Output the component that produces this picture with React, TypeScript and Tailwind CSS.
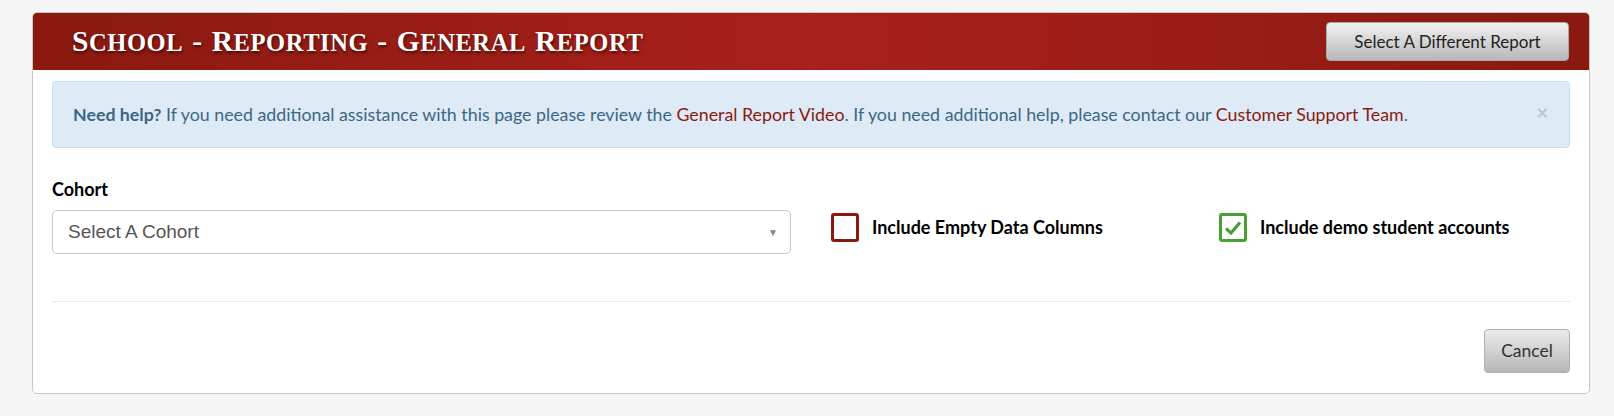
import { useState } from 'react';

const SANS = { fontFamily: 'Lato, "Open Sans", "Noto Sans", sans-serif' };
const SERIF = { fontFamily: '"Liberation Serif", "DejaVu Serif", serif' };

const TITLE = ['School', '-', 'Reporting', '-', 'General', 'Report'];

const Check = ({ color }: { color: string }) => (
  <svg width="18" height="16" viewBox="0 0 18 16">
    <path d="M2 8.5 L7 13 L16 2.5" fill="none" stroke={color} strokeWidth="3.2" />
  </svg>
);

const App = () => {
  const [emptyCols, setEmptyCols] = useState(false);
  const [demo, setDemo] = useState(true);

  return (
    <div className="min-h-[416px] w-full bg-[#f5f5f5] pt-[12px] pl-[32px] pr-[24px]" style={SANS}>
      <div className="w-[1558px] rounded-[5px] border border-[#c8c8c8] bg-white overflow-hidden">
        {/* Header */}
        <div className="h-[57px] flex items-center justify-between pl-[39px] pr-[20px] bg-[linear-gradient(to_right,#8a1910,#a8211a_50%,#8a1910)]">
          <h1
            className="flex items-baseline gap-[9px] text-white font-bold tracking-[0.6px] uppercase [text-shadow:1px_2px_3px_rgba(0,0,0,0.55)]"
            style={SERIF}
          >
            {TITLE.map((w, i) => (
              <span key={i}>
                <span className="text-[29.5px]">{w[0]}</span>
                <span className="text-[24.5px]">{w.slice(1)}</span>
              </span>
            ))}
          </h1>
          <button className="h-[39px] w-[243px] rounded-[4px] border border-[#aaa] bg-[linear-gradient(to_bottom,#f2f2f2,#b8b8b8)] text-[17px] text-[#222]">
            Select A Different Report
          </button>
        </div>

        {/* Body */}
        <div className="px-[19px] pt-[11px] pb-[20px]">
          <div className="relative h-[67px] rounded-[4px] border border-[#c3dff0] bg-[#deebf6] flex items-center pl-[20px] pr-[50px] text-[17.8px] text-[#3b6785]">
            <p>
              <span className="font-bold">Need help?</span> If you need additional assistance with this page please review the{' '}
              <span className="text-[#8a1a10]">General Report Video</span>. If you need additional help, please contact our{' '}
              <span className="text-[#8a1a10]">Customer Support Team</span>.
            </p>
            <span className="absolute right-[21px] top-[20px] text-[20px] font-bold text-[#b7c8d6] leading-none">×</span>
          </div>

          <div className="flex items-start mt-[30px]">
            <div className="w-[739px]">
              <label className="block text-[18px] font-bold text-black leading-[22px]">Cohort</label>
              <div className="mt-[10px] h-[44px] rounded-[5px] border border-[#c9c9c9] flex items-center justify-between pl-[15px] pr-[12px]">
                <span className="text-[19px] text-[#555]" style={{ fontFamily: '"Liberation Sans", Arial, sans-serif' }}>
                  Select A Cohort
                </span>
                <span className="text-[10px] text-[#888]">▼</span>
              </div>
            </div>

            <button
              onClick={() => setEmptyCols(!emptyCols)}
              className="ml-[40px] mt-[35px] flex items-center gap-[13px] w-[388px]"
            >
              <span className="w-[28px] h-[29px] rounded-[3px] border-[3px] border-[#8a1a10] flex items-center justify-center">
                {emptyCols && <Check color="#8a1a10" />}
              </span>
              <span className="text-[18px] font-bold text-black">Include Empty Data Columns</span>
            </button>

            <button onClick={() => setDemo(!demo)} className="mt-[35px] flex items-center gap-[13px]">
              <span className="w-[28px] h-[29px] rounded-[3px] border-[3px] border-[#47a02f] flex items-center justify-center">
                {demo && <Check color="#47a02f" />}
              </span>
              <span className="text-[18px] font-bold text-black">Include demo student accounts</span>
            </button>
          </div>

          <div className="mt-[47px] border-t border-[#e8e8e8]" />

          <div className="flex justify-end mt-[27px]">
            <button className="h-[44px] w-[86px] rounded-[4px] border border-[#b0b0b0] bg-[linear-gradient(to_bottom,#ececec,#b6b6b6)] text-[17.5px] text-[#333]">
              Cancel
            </button>
          </div>
        </div>
      </div>
    </div>
  );
};

export default App;
